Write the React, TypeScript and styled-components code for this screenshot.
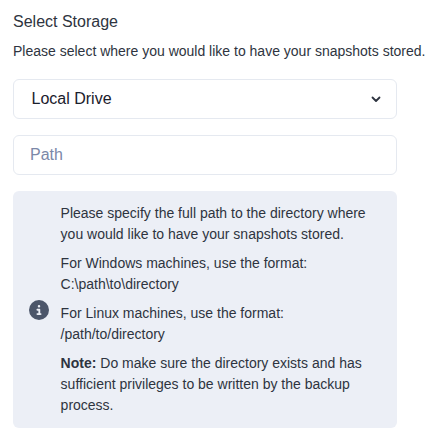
import React from "react";
import styled, { createGlobalStyle } from "styled-components";
import { FaCircleInfo } from "react-icons/fa6";

const Global = createGlobalStyle`
  html, body { margin: 0; padding: 0; background: #fff; }
  body { font-family: "Liberation Sans", Arial, sans-serif; color: #2e3440; }
  * { box-sizing: border-box; }
`;

const Page = styled.div`
  width: 443px;
  height: 447px;
  padding: 10px 0 0 13px;
  overflow: hidden;
`;

const Title = styled.h2`
  margin: 0;
  font-size: 16px;
  font-weight: 400;
  line-height: 24px;
  color: #2e3440;
`;

const Description = styled.p`
  margin: 7px 0 0;
  font-size: 14px;
  line-height: 21px;
  color: #2e3440;
`;

const Fields = styled.div`
  margin-top: 17px;
  width: 384px;
  display: flex;
  flex-direction: column;
  gap: 16px;
`;

const Field = styled.div`
  height: 40px;
  border: 1px solid #e5e9f0;
  border-radius: 6px;
  background: #fff;
  display: flex;
  align-items: center;
  justify-content: space-between;
  font-size: 16px;
`;

const SelectValue = styled.span`
  padding-left: 17.5px;
  color: #1a202c;
`;

const Chevron = styled.svg`
  width: 20px;
  height: 20px;
  margin-right: 10px;
  color: #2e3440;
`;

const PathInput = styled.input`
  width: 100%;
  height: 100%;
  border: 0;
  outline: 0;
  background: transparent;
  padding: 0 16px;
  font: inherit;
  color: #1a202c;
  border-radius: 6px;
  &::placeholder { color: #7b88a8; opacity: 1; }
`;

const Notice = styled.div`
  margin-top: 16px;
  width: 384px;
  padding: 12px 16px;
  background: #eceff6;
  border-radius: 6px;
  display: flex;
  align-items: center;
  gap: 11.6px;
`;

const NoticeIcon = styled(FaCircleInfo)`
  flex: none;
  width: 20px;
  height: 20px;
  color: #4c566a;
`;

const NoticeBody = styled.div`
  display: flex;
  flex-direction: column;
  gap: 8px;
`;

const NoticeText = styled.p`
  margin: 0;
  font-size: 14px;
  line-height: 21px;
  color: #2e3440;
`;

export default function App() {
  return (
    <Page>
      <Global />
      <Title>Select Storage</Title>
      <Description>Please select where you would like to have your snapshots stored.</Description>
      <Fields>
        <Field>
          <SelectValue>Local Drive</SelectValue>
          <Chevron viewBox="0 0 20 20" fill="none" stroke="currentColor" strokeWidth="1.8" strokeLinecap="round" strokeLinejoin="round">
            <path d="M6.5 8.5 10 12l3.5-3.5" />
          </Chevron>
        </Field>
        <Field>
          <PathInput placeholder="Path" />
        </Field>
      </Fields>
      <Notice>
        <NoticeIcon />
        <NoticeBody>
          <NoticeText>Please specify the full path to the directory where you would like to have your snapshots stored.</NoticeText>
          <NoticeText>For Windows machines, use the format:<br />C:\path\to\directory</NoticeText>
          <NoticeText>For Linux machines, use the format:<br />/path/to/directory</NoticeText>
          <NoticeText><b>Note:</b> Do make sure the directory exists and has sufficient privileges to be written by the backup process.</NoticeText>
        </NoticeBody>
      </Notice>
    </Page>
  );
}
